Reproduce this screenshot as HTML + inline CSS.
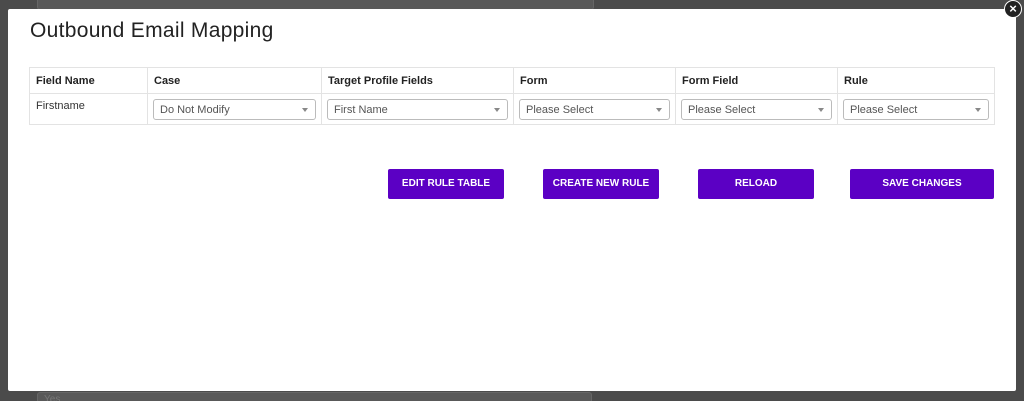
<!DOCTYPE html>
<html><head><style>
html,body{margin:0;width:1024px;height:401px;overflow:hidden}
body{background:#4b4b4b;position:relative;font-family:"Liberation Sans",sans-serif;}
.bgin{position:absolute;left:37px;top:-6px;width:555px;height:14px;background:#595959;border:1px solid #666;border-radius:3px}
.bgin2{position:absolute;left:37px;top:392px;width:555px;height:12px;background:#595959;border:1px solid #666;border-radius:3px;color:#777;font-size:10px;padding-left:6px;line-height:14px;box-sizing:border-box}
.modal{position:absolute;left:8px;top:9px;width:1008px;height:382px;background:#fff;border-radius:2px}
h1{position:absolute;left:22px;top:10px;margin:0;font-weight:normal;font-size:21px;color:#222;letter-spacing:.3px}
table{position:absolute;left:21px;top:58px;width:966px;border-collapse:collapse;font-size:11px;color:#333}
td,th{border:1px solid #e3e3e3;text-align:left;padding:0 6px}
th{height:25px;font-weight:bold;color:#222}
td{height:31px;vertical-align:middle;padding:0 5px;box-sizing:border-box}
.sel{border:1px solid #bbb;border-radius:3px;height:21px;line-height:21px;padding-left:6px;color:#555;position:relative;font-size:11px;box-sizing:border-box}
.sel:after{content:"";position:absolute;right:7px;top:8px;border:3px solid transparent;border-top:4px solid #888}
.btn{position:absolute;top:160px;height:30px;background:#5b00c4;color:#fff;font-weight:bold;font-size:10px;text-align:center;line-height:30px;border-radius:2px}
.x{position:absolute;left:1004px;top:0px;width:18px;height:18px;border-radius:50%;background:#222;border:1.5px solid #fff;color:#fff;font-size:13px;font-weight:bold;text-align:center;line-height:16px;box-sizing:border-box}
</style></head><body>
<div class="bgin"></div><div class="bgin2">Yes</div>
<div class="modal">
<h1>Outbound Email Mapping</h1>
<table>
<tr><th style="width:105px">Field Name</th><th style="width:161px">Case</th><th style="width:179px">Target Profile Fields</th><th style="width:149px">Form</th><th style="width:149px">Form Field</th><th>Rule</th></tr>
<tr><td style="vertical-align:top;padding-top:6px;padding-left:6px">Firstname</td><td><div class="sel">Do Not Modify</div></td><td><div class="sel">First Name</div></td><td><div class="sel">Please Select</div></td><td><div class="sel">Please Select</div></td><td><div class="sel">Please Select</div></td></tr>
</table>
<div class="btn" style="left:380px;width:116px">EDIT RULE TABLE</div>
<div class="btn" style="left:535px;width:116px">CREATE NEW RULE</div>
<div class="btn" style="left:690px;width:116px">RELOAD</div>
<div class="btn" style="left:842px;width:144px">SAVE CHANGES</div>
</div>
<div class="x">×</div>
</body></html>
